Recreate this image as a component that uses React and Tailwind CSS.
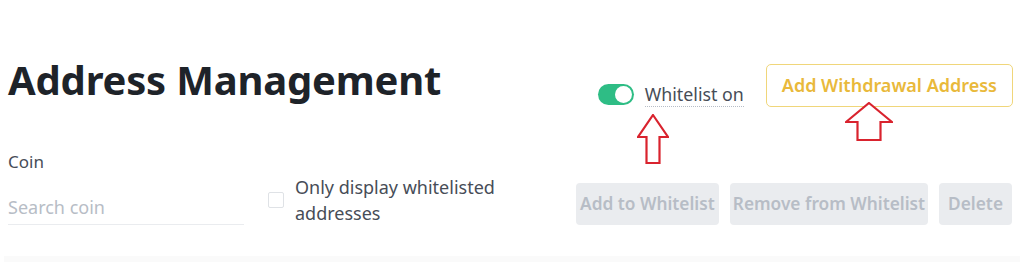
import React, { useState } from 'react';

const ArrowUp = ({ className, w, h, head, shaft }) => {
  // outlined up arrow: head height `head`, shaft width `shaft`
  const cx = w / 2;
  const s = shaft / 2;
  const pts = [
    [cx, 1],
    [w - 1, head],
    [cx + s, head],
    [cx + s, h - 1],
    [cx - s, h - 1],
    [cx - s, head],
    [1, head],
  ]
    .map((p) => p.join(','))
    .join(' ');
  return (
    <svg className={className} width={w} height={h} viewBox={`0 0 ${w} ${h}`}>
      <polygon points={pts} fill="white" stroke="#d9232e" strokeWidth="2.2" strokeLinejoin="miter" />
    </svg>
  );
};

const App = () => {
  const [whitelist, setWhitelist] = useState(true);
  const [onlyWhitelisted, setOnlyWhitelisted] = useState(false);
  const [search, setSearch] = useState('');

  return (
    <div
      className="relative w-[1024px] h-[262px] overflow-hidden bg-white pl-2 pr-[11px]"
      style={{ fontFamily: '"Noto Sans", "Open Sans", Arial, sans-serif' }}
    >
      <div className="flex items-start justify-between pt-[50px]">
        <h1 className="text-[40px] leading-[60px] font-bold text-[#1e2329] tracking-[-0.2px]">
          Address Management
        </h1>
        <div className="flex items-start">
          <div className="flex items-center mt-[32px]">
            <button
              onClick={() => setWhitelist(!whitelist)}
              className={`w-9 h-[21px] rounded-full p-[2px] flex ${
                whitelist ? 'bg-[#2ebd85] justify-end' : 'bg-[#eaecef] justify-start'
              }`}
            >
              <span className="w-[17px] h-[17px] rounded-full bg-white" />
            </button>
            <span className="ml-[11px] text-[17.8px] leading-6 text-[#474d57] border-b border-dotted border-[#b7bdc6]">
              Whitelist on
            </span>
          </div>
          <button className="ml-[22px] mt-[14px] h-[43px] px-[15px] rounded-[5px] border border-[#f0d67a] text-[18px] font-semibold text-[#e9b93b]">
            Add Withdrawal Address
          </button>
        </div>
      </div>

      <div className="flex items-start mt-[40px]">
        <div className="w-[236px]">
          <div className="text-[17px] leading-6 text-[#474d57]">Coin</div>
          <input
            value={search}
            onChange={(e) => setSearch(e.target.value)}
            placeholder="Search coin"
            className="mt-[16px] w-full h-[35px] text-[18px] text-[#474d57] placeholder-[#b7bdc6] border-b border-[#eaecef] outline-none"
          />
        </div>
        <label className="ml-[24px] mt-[24px] flex items-center cursor-pointer">
          <span
            onClick={() => setOnlyWhitelisted(!onlyWhitelisted)}
            className={`w-4 h-4 rounded-[2px] border ${
              onlyWhitelisted ? 'bg-[#f0b90b] border-[#f0b90b]' : 'border-[#dfe2e6]'
            }`}
          />
          <span className="ml-[11px] w-[230px] text-[18px] leading-[26px] text-[#474d57]">
            Only display whitelisted addresses
          </span>
        </label>
        <div className="ml-auto mr-[1px] mt-[33px] flex gap-[11px]">
          <button className="h-[42px] px-[4px] rounded-[4px] bg-[#eaecef] text-[17.3px] font-semibold text-[#b7bdc6]">
            Add to Whitelist
          </button>
          <button className="h-[42px] px-[3px] rounded-[4px] bg-[#eaecef] text-[17.3px] font-semibold text-[#b7bdc6]">
            Remove from Whitelist
          </button>
          <button className="h-[42px] px-[9px] rounded-[4px] bg-[#eaecef] text-[17.3px] font-semibold text-[#b7bdc6]">
            Delete
          </button>
        </div>
      </div>

      <div className="absolute left-[4px] right-[4px] top-[256px] h-[6px] bg-[#fafafa]" />

      <ArrowUp className="absolute left-[637px] top-[114px]" w={32} h={50} head={23} shaft={13} />
      <ArrowUp className="absolute left-[845px] top-[102px]" w={48} h={39} head={20} shaft={23} />
    </div>
  );
};

export default App;
